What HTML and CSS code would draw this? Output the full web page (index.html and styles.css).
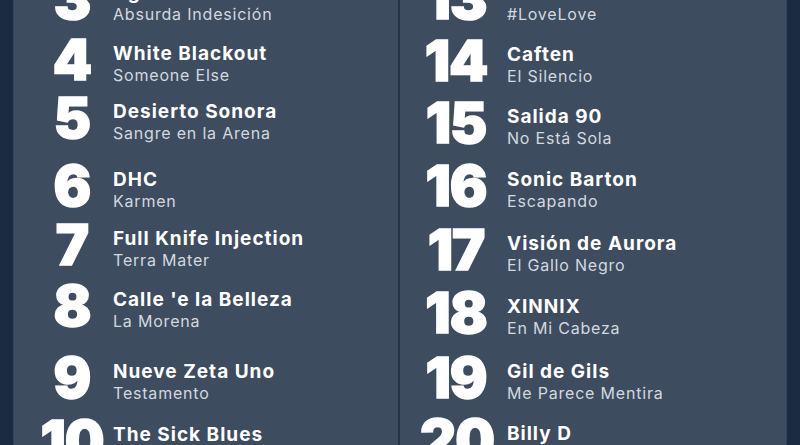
FILE: index.html
```html
<!DOCTYPE html>
<html lang="es">
<head>
<meta charset="utf-8">
<title>Ranking</title>
<link rel="stylesheet" href="styles.css">
</head>
<body>
<main class="panel">
  <section class="col col-left">
    <div class="row"><div class="num">3</div><div class="info"><div class="artist">Agatha 33</div><div class="song">Absurda Indesición</div></div></div>
    <div class="row"><div class="num">4</div><div class="info"><div class="artist">White Blackout</div><div class="song">Someone Else</div></div></div>
    <div class="row"><div class="num">5</div><div class="info"><div class="artist">Desierto Sonora</div><div class="song">Sangre en la Arena</div></div></div>
    <div class="row"><div class="num">6</div><div class="info"><div class="artist">DHC</div><div class="song">Karmen</div></div></div>
    <div class="row"><div class="num">7</div><div class="info"><div class="artist">Full Knife Injection</div><div class="song">Terra Mater</div></div></div>
    <div class="row"><div class="num">8</div><div class="info"><div class="artist">Calle 'e la Belleza</div><div class="song">La Morena</div></div></div>
    <div class="row"><div class="num">9</div><div class="info"><div class="artist">Nueve Zeta Uno</div><div class="song">Testamento</div></div></div>
    <div class="row"><div class="num">10</div><div class="info"><div class="artist">The Sick Blues</div><div class="song">Nada</div></div></div>
  </section>
  <section class="col col-right">
    <div class="row"><div class="num">13</div><div class="info"><div class="artist">Love Love</div><div class="song">#LoveLove</div></div></div>
    <div class="row"><div class="num">14</div><div class="info"><div class="artist">Caften</div><div class="song">El Silencio</div></div></div>
    <div class="row"><div class="num">15</div><div class="info"><div class="artist">Salida 90</div><div class="song">No Está Sola</div></div></div>
    <div class="row"><div class="num">16</div><div class="info"><div class="artist">Sonic Barton</div><div class="song">Escapando</div></div></div>
    <div class="row"><div class="num">17</div><div class="info"><div class="artist">Visión de Aurora</div><div class="song">El Gallo Negro</div></div></div>
    <div class="row"><div class="num">18</div><div class="info"><div class="artist">XINNIX</div><div class="song">En Mi Cabeza</div></div></div>
    <div class="row"><div class="num">19</div><div class="info"><div class="artist">Gil de Gils</div><div class="song">Me Parece Mentira</div></div></div>
    <div class="row"><div class="num">20</div><div class="info"><div class="artist">Billy D</div><div class="song">Vida</div></div></div>
  </section>
</main>
</body>
</html>
```
FILE: styles.css
```css
html, body {
  margin: 0;
  padding: 0;
  height: 100%;
  overflow: hidden;
}
body {
  background: #1b2b41;
  font-family: "Inter", "Lato", sans-serif;
}
.panel {
  margin: 0 13px;
  height: 445px;
  background: #3d4c5f;
  display: grid;
  grid-template-columns: 386px 1fr;
  border-left: 1px dotted #2c3c52;
  border-right: 1px dotted #2c3c52;
  box-sizing: border-box;
  overflow: hidden;
}
.col {
  margin-top: -21px;
}
.col-left {
  border-right: 2px solid #22334a;
}
.row {
  display: flex;
  align-items: flex-start;
  height: 63px;
}
.num {
  flex: none;
  width: 72px;
  margin-top: -2px;
  font-family: "Inter", "Lato", sans-serif;
  font-weight: 900;
  font-size: 56px;
  line-height: 44px;
  color: #ffffff;
  text-align: center;
  letter-spacing: -1px;
  -webkit-text-stroke: 1.5px #ffffff;
}
.col-left .num {
  margin-left: 22px;
  margin-right: 5px;
}
.col-right .num {
  margin-left: 20px;
  margin-right: 15px;
}
.info {
  padding-top: 3px;
}
.artist {
  font-size: 19px;
  line-height: 22px;
  font-weight: 700;
  color: #ffffff;
  white-space: nowrap;
  letter-spacing: 1px;
}
.song {
  font-size: 16px;
  line-height: 21px;
  font-weight: 400;
  color: #d3d8df;
  white-space: nowrap;
  letter-spacing: 0.8px;
}
.col-left .row:nth-child(1) { height: 61px; }
.col-left .row:nth-child(2) { height: 58px; }
.col-left .row:nth-child(3) { height: 68px; }
.col-left .row:nth-child(4) { height: 59px; }
.col-left .row:nth-child(5) { height: 61px; }
.col-left .row:nth-child(6) { height: 72px; }
.col-left .row:nth-child(7) { height: 63px; }
.col-right .row:nth-child(1) { height: 62px; }
.col-right .row:nth-child(2) { height: 62px; }
.col-right .row:nth-child(3) { height: 63px; }
.col-right .row:nth-child(4) { height: 64px; }
.col-right .row:nth-child(5) { height: 63px; }
.col-right .row:nth-child(6) { height: 65px; }
.col-right .row:nth-child(7) { height: 62px; }
```
